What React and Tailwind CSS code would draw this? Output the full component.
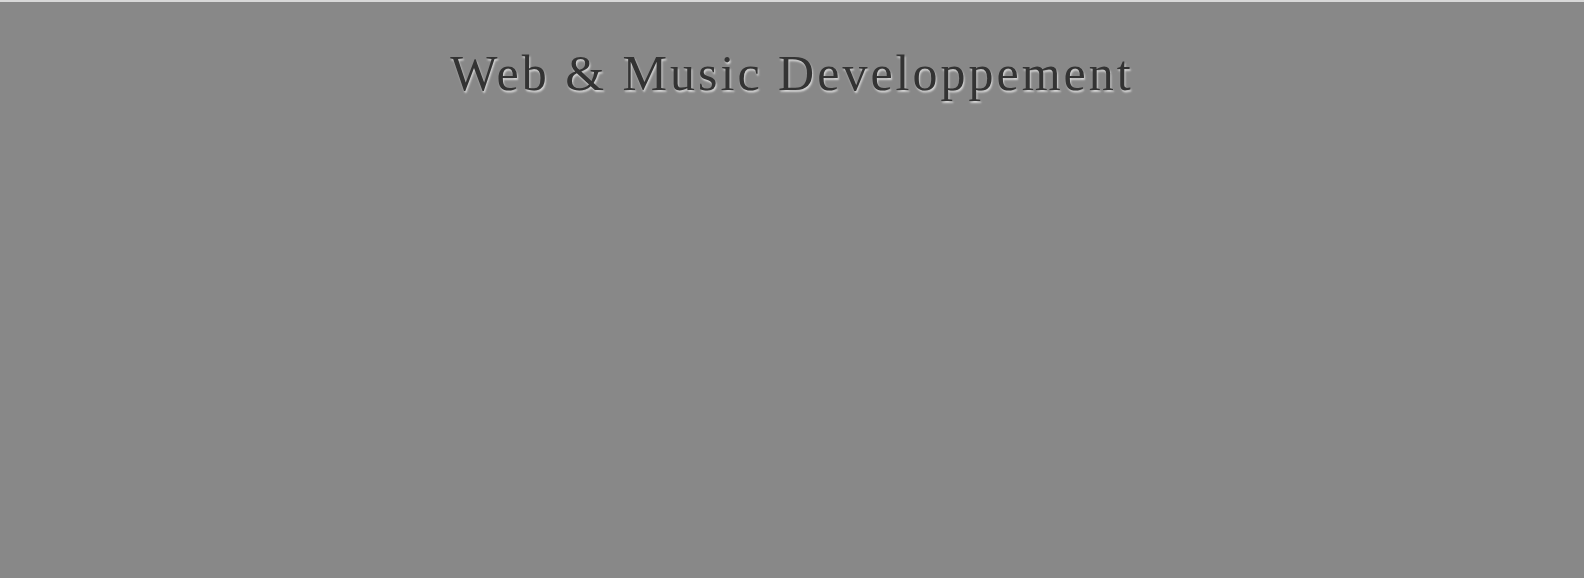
export default function App() {
  return (
    <div className="min-h-[578px] bg-[#888888] border-t-2 border-[#d8d8d8]">
      <h1
        className="pt-[42px] text-center text-[50px] leading-[58px] tracking-[3px] text-[#333333] [text-shadow:1px_2px_2px_#d6d6d6]"
        style={{ fontFamily: '"Liberation Serif", serif' }}
      >
        Web &amp; Music Developpement
      </h1>
    </div>
  );
}
